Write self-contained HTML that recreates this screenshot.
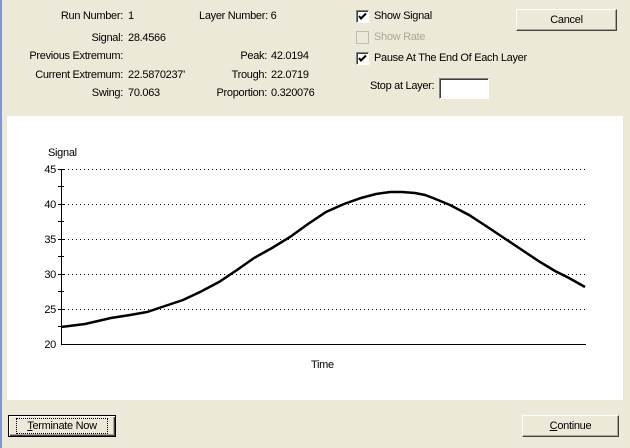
<!DOCTYPE html>
<html><head><style>
body{margin:0;width:630px;height:448px;background:#ece9d8;position:relative;overflow:hidden;font-family:"Liberation Sans",sans-serif;font-size:11px;letter-spacing:-0.3px;color:#000}
.a{position:absolute;white-space:nowrap;line-height:13px}
.r{text-align:right}
.btn{position:absolute;background:#ece9d8;border:1px solid;border-color:#fff #404040 #404040 #fff;box-shadow:inset -1px -1px #aca899;text-align:center;box-sizing:border-box}
.cb{position:absolute;width:11px;height:11px;border:1px solid;border-color:#808080 #fff #fff #808080;background:#fff;box-shadow:inset 1px 1px #404040}
</style></head><body>
<div style="position:absolute;left:0;top:0;width:2px;height:448px;background:#7a96df"></div>
<div class="a r" style="left:0;width:123px;top:10px">Run Number:</div><div class="a" style="left:128px;top:10px">1</div>
<div class="a" style="left:199px;top:10px">Layer Number: 6</div>
<div class="a r" style="left:0;width:123px;top:32px">Signal:</div><div class="a" style="left:128px;top:32px">28.4566</div>
<div class="a r" style="left:0;width:123px;top:50px">Previous Extremum:</div>
<div class="a r" style="left:0;width:123px;top:69px">Current Extremum:</div><div class="a" style="left:128px;top:69px">22.5870237'</div>
<div class="a r" style="left:150px;width:117px;top:50px">Peak:</div><div class="a" style="left:271px;top:50px">42.0194</div>
<div class="a r" style="left:0;width:123px;top:87px">Swing:</div><div class="a" style="left:128px;top:87px">70.063</div>
<div class="a r" style="left:150px;width:117px;top:69px">Trough:</div><div class="a" style="left:271px;top:69px">22.0719</div>
<div class="a r" style="left:150px;width:117px;top:87px">Proportion:</div><div class="a" style="left:271px;top:87px">0.320076</div>
<div class="cb" style="left:356px;top:10px"><svg width="11" height="11" style="position:absolute;left:0;top:0"><path d="M2 5 L4 7.5 L9 2.5" stroke="#000" stroke-width="2" fill="none"/></svg></div>
<div class="a" style="left:374px;top:10px">Show Signal</div>
<div class="cb" style="left:356px;top:31px;background:#ece9d8;box-shadow:none;border-color:#c0bdb0"></div>
<div class="a" style="left:374px;top:31px;color:#aca899">Show Rate</div>
<div class="cb" style="left:356px;top:52px"><svg width="11" height="11" style="position:absolute;left:0;top:0"><path d="M2 5 L4 7.5 L9 2.5" stroke="#000" stroke-width="2" fill="none"/></svg></div>
<div class="a" style="left:374px;top:52px">Pause At The End Of Each Layer</div>
<div class="a" style="left:370px;top:80px">Stop at Layer:</div>
<div style="position:absolute;left:439px;top:78px;width:50px;height:21px;box-sizing:border-box;border:1px solid;border-color:#808080 #fff #fff #808080;background:#fff;box-shadow:inset 1px 1px #404040"></div>
<div class="btn" style="left:516px;top:9px;width:101px;height:22px;line-height:20px">Cancel</div>
<div style="position:absolute;left:7px;top:116px;width:616px;height:284px;background:#fff"></div>
<svg style="position:absolute;left:0;top:0" width="630" height="448">
<g stroke="#000" stroke-dasharray="1 3" stroke-width="1">
<line x1="64" y1="169.5" x2="586" y2="169.5"/><line x1="64" y1="204.5" x2="586" y2="204.5"/><line x1="64" y1="239.5" x2="586" y2="239.5"/><line x1="64" y1="274.5" x2="586" y2="274.5"/><line x1="64" y1="309.5" x2="586" y2="309.5"/>
</g>
<g stroke="#000" stroke-width="1">
<line x1="61.5" y1="169" x2="61.5" y2="344"/><line x1="61" y1="344.5" x2="586" y2="344.5"/>
<line x1="58" y1="169.5" x2="64" y2="169.5"/><line x1="58" y1="186.5" x2="64" y2="186.5"/><line x1="58" y1="204.5" x2="64" y2="204.5"/><line x1="58" y1="221.5" x2="64" y2="221.5"/><line x1="58" y1="239.5" x2="64" y2="239.5"/><line x1="58" y1="256.5" x2="64" y2="256.5"/><line x1="58" y1="274.5" x2="64" y2="274.5"/><line x1="58" y1="291.5" x2="64" y2="291.5"/><line x1="58" y1="309.5" x2="64" y2="309.5"/><line x1="58" y1="326.5" x2="64" y2="326.5"/>
</g>
<polyline fill="none" stroke="#000" stroke-width="2.5" points="61,327 85,324 111,318 130,315 147,312 165,306 183,300 200,292 219,282 237,270 254,258 272,248 290,237 308,224 326,212 344,204 361,198 376,194 390,192 402,192 415,193 425,195 433,198 450,205 469,215 486,226 504,238 522,250 540,262 555,271 569,278 585,287"/>
<g font-family="Liberation Sans,sans-serif" font-size="11" fill="#000">
<text x="48" y="156">Signal</text>
<text x="56" y="173" text-anchor="end">45</text><text x="56" y="208" text-anchor="end">40</text><text x="56" y="243" text-anchor="end">35</text><text x="56" y="278" text-anchor="end">30</text><text x="56" y="313" text-anchor="end">25</text><text x="56" y="348" text-anchor="end">20</text>
<text x="311" y="368">Time</text>
</g>
</svg>
<div class="btn" style="left:8px;top:415px;width:108px;height:22px;border:1px solid #000;box-shadow:inset 1px 1px #fff,inset -1px -1px #404040,inset -2px -2px #aca899;line-height:20px"><span style="display:inline-block;border:1px dotted #000;padding:0 10px;line-height:14px"><u>T</u>erminate Now</span></div>
<div class="btn" style="left:522px;top:415px;width:97px;height:22px;line-height:20px"><u>C</u>ontinue</div>
</body></html>
